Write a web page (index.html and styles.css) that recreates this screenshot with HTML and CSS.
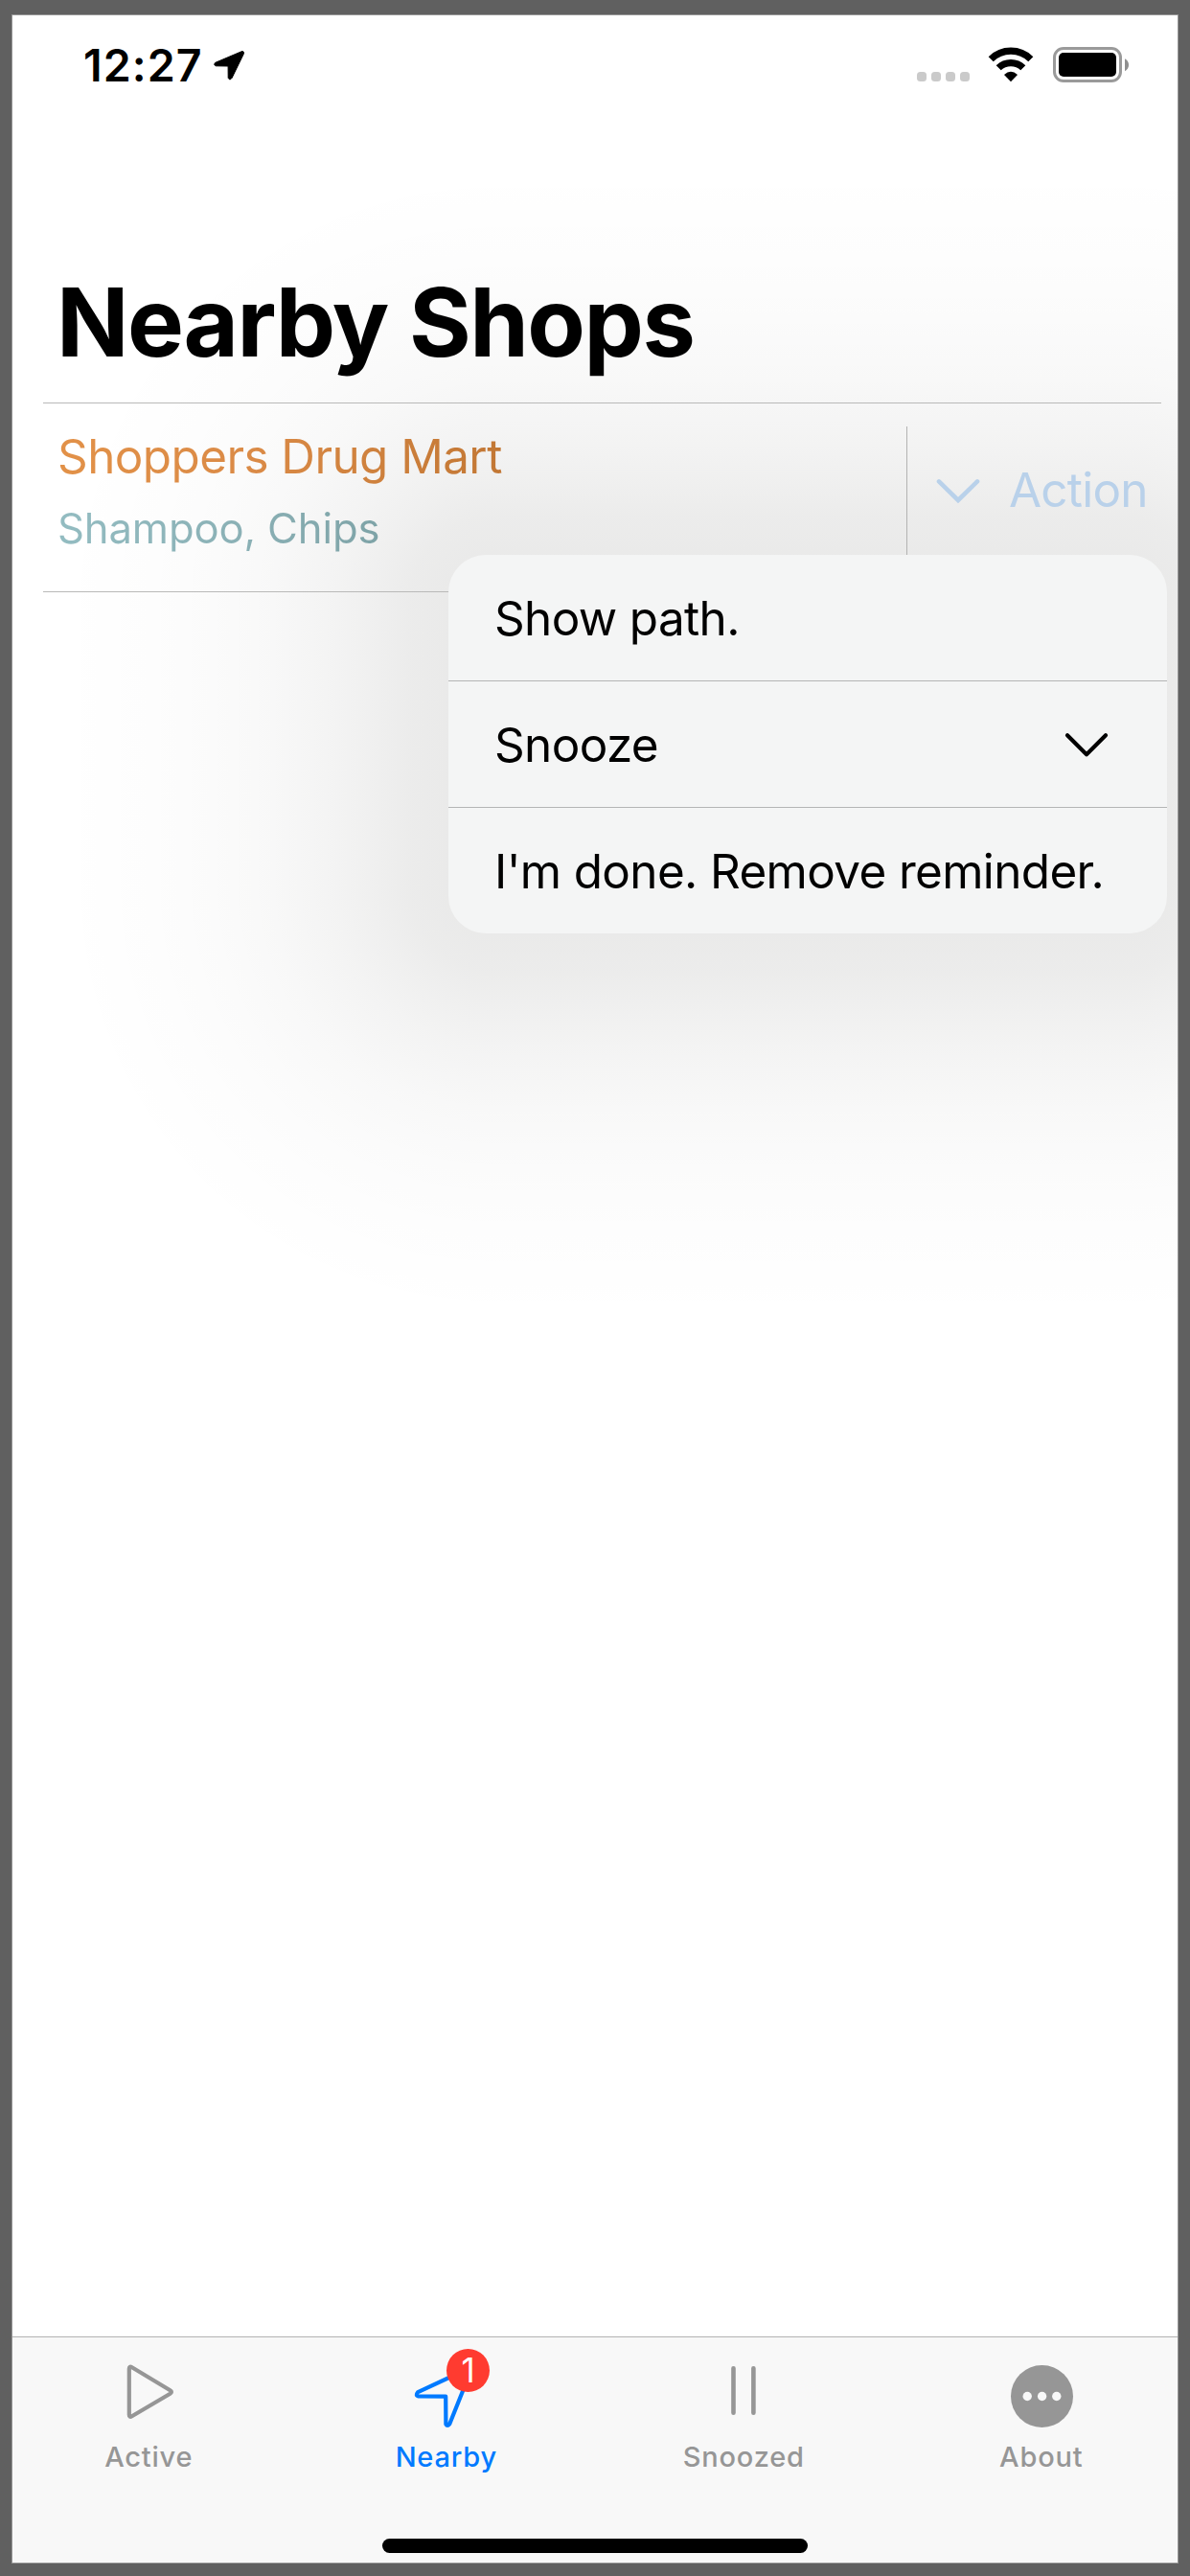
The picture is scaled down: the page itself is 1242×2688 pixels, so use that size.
FILE: index.html
```
<!DOCTYPE html>
<html lang="en">
<head>
<meta charset="utf-8">
<title>Nearby Shops</title>
<link rel="stylesheet" href="styles.css">
</head>
<body>
<div class="screen">
  <header class="status">
    <span class="time">12:27</span>
    <svg class="location" width="34" height="34" viewBox="0 0 34 34"><path d="M30 2.8 L3.1 14.2 Q.2 16.3 3.3 17.8 L16.1 18 L16.2 30.3 Q17.8 33.5 20.1 30.3 L32.3 5.2 Q33 1.8 30 2.8Z" stroke="#000" stroke-width="1" stroke-linejoin="round"/></svg>
    <div class="dots"><i></i><i></i><i></i><i></i></div>
    <svg class="wifi" width="48" height="37" viewBox="0 0 48 37">
      <path d="M3.2 12.8 A29.5 29.5 0 0 1 44.8 12.8" fill="none" stroke="#000" stroke-width="7.2"/>
      <path d="M11.2 21.8 A18.3 18.3 0 0 1 36.8 21.8" fill="none" stroke="#000" stroke-width="7.2"/>
      <path d="M24 36.2 L17 29 Q24 22.6 31 29Z"/>
    </svg>
    <svg class="battery" width="80" height="38" viewBox="0 0 80 38">
      <rect x="1.5" y="1.5" width="69" height="34" rx="9.5" fill="none" stroke="#9a9a9a" stroke-width="3"/>
      <rect x="6" y="6" width="60" height="25" rx="5"/>
      <path d="M75 12.2 Q79 14.5 79 18.7 T75 25.2Z" fill="#8f8f8f"/>
    </svg>
  </header>

  <h1 class="title">Nearby Shops</h1>

  <main class="list">
    <div class="row">
      <div class="shop">
        <div class="name">Shoppers Drug Mart</div>
        <div class="items">Shampoo, Chips</div>
      </div>
      <div class="action">
        <svg width="46" height="27" viewBox="0 0 46 27"><path d="M3 3.4 L23 23 L43 3.4" fill="none" stroke="#b9d1ea" stroke-width="4.6" stroke-linecap="round" stroke-linejoin="miter"/></svg>
        <span>Action</span>
      </div>
    </div>
  </main>

  <div class="menu">
    <div class="item">Show path.</div>
    <div class="item">Snooze
      <svg width="46" height="29" viewBox="0 0 46 29"><path d="M3 5.2 L23 25.2 L43 5.2" fill="none" stroke="#000" stroke-width="4.2" stroke-linecap="round" stroke-linejoin="round"/></svg>
    </div>
    <div class="item">I'm done. Remove reminder.</div>
  </div>

  <nav class="tabs">
    <div class="bar">
      <div class="tab">
        <svg width="72" height="72" viewBox="0 0 72 72"><path d="M15.8 8.8 Q15.8 5.6 18.7 7.3 L58.6 31.3 Q61.3 33 58.6 34.7 L18.7 58.2 Q15.8 59.9 15.8 56.7Z" fill="none" stroke="#969696" stroke-width="4.2"/></svg>
        <span>Active</span>
      </div>
      <div class="tab active">
        <svg width="72" height="72" viewBox="0 0 72 72"><path d="M58 9 L6.2 33.2 Q3.2 36.8 6.8 37.5 L35.2 37.7 L35.4 66.5 Q36.8 69.4 39.2 66.5 L61 12Z" fill="none" stroke="#007aff" stroke-width="4.2" stroke-linejoin="round"/></svg>
        <b class="badge">1</b>
        <span>Nearby</span>
      </div>
      <div class="tab">
        <svg width="72" height="72" viewBox="0 0 72 72"><path d="M25.5 8.2 V54.8 M46.4 8.2 V54.8" stroke="#969696" stroke-width="4.6" stroke-linecap="round"/></svg>
        <span>Snoozed</span>
      </div>
      <div class="tab">
        <svg width="72" height="72" viewBox="0 0 72 72"><circle cx="36.5" cy="37.5" r="32.5" fill="#969696"/><g fill="#f8f8f8"><circle cx="21.2" cy="37.5" r="4.7"/><circle cx="36.6" cy="37.5" r="4.7"/><circle cx="51.8" cy="37.5" r="4.7"/></g></svg>
        <span>About</span>
      </div>
    </div>
    <div class="home"></div>
  </nav>
</div>
</body>
</html>
```
FILE: styles.css
```
* { box-sizing: border-box; }
body {
  margin: 0;
  height: 2688px;
  padding: 15px 12px 13px;
  background: #606060;
  font-family: Inter, "Liberation Sans", sans-serif;
  color: #000;
}
.screen {
  position: relative;
  isolation: isolate;
  display: flex;
  flex-direction: column;
  height: 2660px;
  border: 1px solid #969696;
  background: #fff;
  overflow: hidden;
}
svg { display: block; flex: none; }

/* status bar */
.status {
  display: flex;
  align-items: flex-start;
  height: 260px;
  padding: 28px 50px 0 74px;
}
.time {
  width: 135px;
  font-size: 46.5px;
  font-weight: 600;
  line-height: 48px;
  letter-spacing: 1.1px;
}
.location { margin-top: 7px; }
.dots { display: flex; gap: 5px; margin: 31px 0 0 auto; }
.dots i { width: 10px; height: 10px; border-radius: 3.5px; background: #cacaca; }
.wifi { margin: 5px 0 0 19px; }
.battery { margin: 5px 0 0 20px; }

.title {
  margin: 0;
  padding-left: 46px;
  height: 144px;
  font-size: 99px;
  font-weight: 700;
  line-height: 120px;
  letter-spacing: -1.5px;
}

/* list of shops */
.list {
  flex: 1;
  padding: 0 17px 0 32px;
}
.row {
  display: flex;
  justify-content: space-between;
  height: 198px;
  border-top: 1px solid #b9b9b8;
  border-bottom: 1px solid #b9b9b8;
}
.shop { padding: 25px 0 0 15px; }
.name, .items { width: max-content; -webkit-background-clip: text; background-clip: text; color: transparent; }
.name {
  font-size: 49.4px;
  line-height: 60px;
  letter-spacing: -.56px;
  background-image: linear-gradient(90deg, #e29148, #da8a46 45%, #c27734);
}
.items {
  margin-top: 19px;
  font-size: 43.6px;
  line-height: 54px;
  letter-spacing: -.12px;
  background-image: linear-gradient(90deg, #93bcc1, #8bb1b6 55%, #7ea3a7);
}
.action {
  display: flex;
  align-items: flex-start;
  gap: 30px;
  width: 266px;
  height: 147px;
  margin-top: 24px;
  padding: 36px 0 0 30px;
  border-left: 1px solid #b3b3b2;
  color: #b9d1ea;
  font-size: 49.4px;
  line-height: 60px;
  letter-spacing: -.75px;
}
.action svg { margin-top: 18px; }

/* dropdown menu */
.menu {
  position: absolute;
  left: 455px;
  top: 563px;
  width: 750px;
  border-radius: 39px;
  background: #f4f5f5;
}
/* soft shadow in nine slices: four round corners and four straight edges */
.menu::before {
  --fade: rgba(10, 10, 4, .086) 11.1%, rgba(10, 10, 4, .077) 20%, rgba(10, 10, 4, .064) 28.4%, rgba(10, 10, 4, .048) 37.8%, rgba(10, 10, 4, .027) 52.7%, rgba(10, 10, 4, .0145) 67%, rgba(10, 10, 4, .007) 81.5%, rgba(10, 10, 4, .002) 92.6%, rgba(10, 10, 4, 0) 100%;
  content: "";
  position: absolute;
  z-index: -1;
  inset: -400px;
  background:
    radial-gradient(circle 450px at 100% 100%, var(--fade)) left top / 450px 450px,
    radial-gradient(circle 450px at 0 100%, var(--fade)) right top / 450px 450px,
    radial-gradient(circle 450px at 100% 0, var(--fade)) left bottom / 450px 450px,
    radial-gradient(circle 450px at 0 0, var(--fade)) right bottom / 450px 450px,
    linear-gradient(to top, var(--fade)) center top / calc(100% - 900px) 450px,
    linear-gradient(to bottom, var(--fade)) center bottom / calc(100% - 900px) 450px,
    linear-gradient(to left, var(--fade)) left center / 450px calc(100% - 900px),
    linear-gradient(to right, var(--fade)) right center / 450px calc(100% - 900px);
  background-repeat: no-repeat;
}
.item {
  display: flex;
  align-items: center;
  justify-content: space-between;
  height: 131px;
  padding: 0 61px 0 48px;
  font-size: 49.4px;
  letter-spacing: -.62px;
}
.item + .item { height: 132px; border-top: 1px solid #b4b5b5; }

/* tab bar */
.tabs {
  position: relative;
  height: 236px;
  border-top: 1px solid #b2b2b2;
  background: #f8f8f8;
}
.bar { display: flex; height: 210px; margin: 0 -13px; }
.tab {
  position: relative;
  flex: 1;
  display: flex;
  flex-direction: column;
  align-items: center;
  padding-top: 24px;
  color: #969696;
  font-size: 29px;
  font-weight: 500;
  letter-spacing: .8px;
}
.tab span { margin-top: 11px; line-height: 36px; }
.tab.active { color: #007aff; }
.badge {
  position: absolute;
  left: 155.5px;
  top: 12px;
  width: 45px;
  height: 45px;
  border-radius: 50%;
  background: #ff3b30;
  color: #fff;
  font-size: 35px;
  font-weight: 400;
  line-height: 45px;
  letter-spacing: 0;
  text-align: center;
}
.home {
  width: 444px;
  height: 15px;
  margin: 0 auto;
  border-radius: 8px;
  background: #000;
}
```
